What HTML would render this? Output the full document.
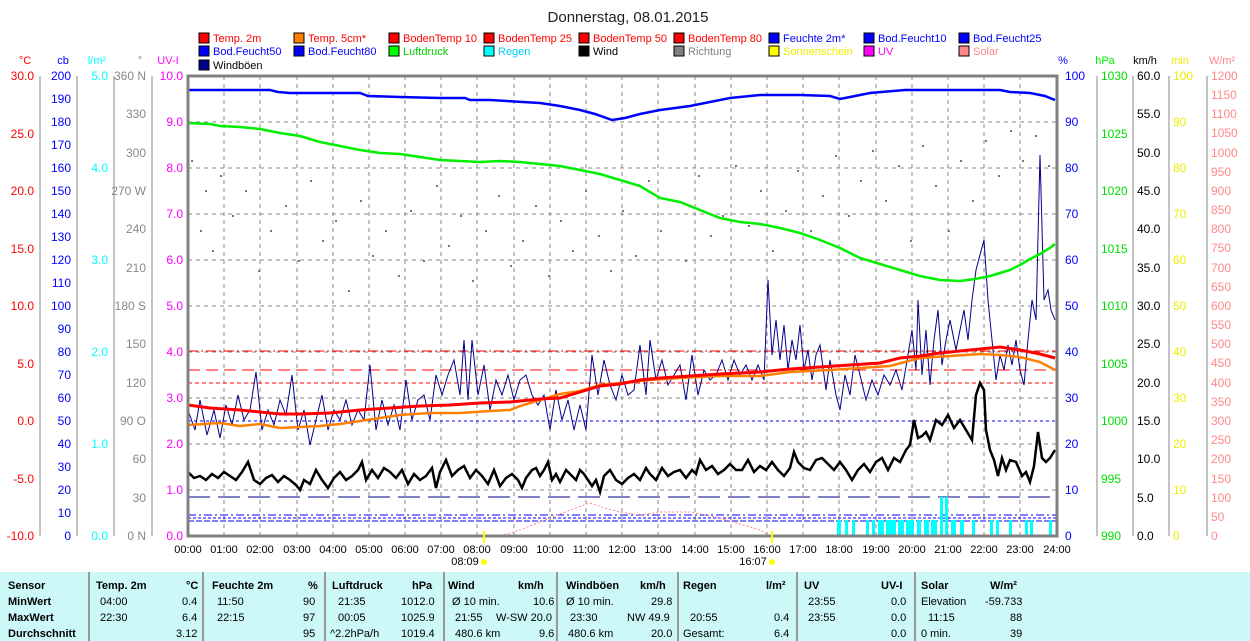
<!DOCTYPE html>
<html><head><meta charset="utf-8"><style>
html,body{margin:0;padding:0;background:#fff;width:1250px;height:641px;overflow:hidden;font-family:"Liberation Sans",sans-serif}
svg text{font-family:"Liberation Sans",sans-serif}
#tbl{position:absolute;left:0;top:572px;width:1250px;height:69px;background:#ccf8f8;font-size:11px}
#tbl div{position:absolute;white-space:nowrap}
.b{font-weight:bold}
.sep{position:absolute;top:0;width:2px;height:69px;background:#999}
</style></head><body>
<svg width="1250" height="572" style="position:absolute;left:0;top:0">
<text x="628" y="22" font-size="15" text-anchor="middle" fill="#222">Donnerstag, 08.01.2015</text>
<g font-size="11">
<rect x="199" y="33" width="10" height="10" fill="#f00" stroke="#000"/><text x="213" y="42" fill="#f00">Temp. 2m</text>
<rect x="294" y="33" width="10" height="10" fill="#ff8000" stroke="#000"/><text x="308" y="42" fill="#f00">Temp. 5cm*</text>
<rect x="389" y="33" width="10" height="10" fill="#f00" stroke="#000"/><text x="403" y="42" fill="#f00">BodenTemp 10</text>
<rect x="484" y="33" width="10" height="10" fill="#f00" stroke="#000"/><text x="498" y="42" fill="#f00">BodenTemp 25</text>
<rect x="579" y="33" width="10" height="10" fill="#f00" stroke="#000"/><text x="593" y="42" fill="#f00">BodenTemp 50</text>
<rect x="674" y="33" width="10" height="10" fill="#f00" stroke="#000"/><text x="688" y="42" fill="#f00">BodenTemp 80</text>
<rect x="769" y="33" width="10" height="10" fill="#00f" stroke="#000"/><text x="783" y="42" fill="#00f">Feuchte 2m*</text>
<rect x="864" y="33" width="10" height="10" fill="#00f" stroke="#000"/><text x="878" y="42" fill="#00f">Bod.Feucht10</text>
<rect x="959" y="33" width="10" height="10" fill="#00f" stroke="#000"/><text x="973" y="42" fill="#00f">Bod.Feucht25</text>
<rect x="199" y="46" width="10" height="10" fill="#00f" stroke="#000"/><text x="213" y="55" fill="#00f">Bod.Feucht50</text>
<rect x="294" y="46" width="10" height="10" fill="#00f" stroke="#000"/><text x="308" y="55" fill="#00f">Bod.Feucht80</text>
<rect x="389" y="46" width="10" height="10" fill="#0f0" stroke="#000"/><text x="403" y="55" fill="#0c0">Luftdruck</text>
<rect x="484" y="46" width="10" height="10" fill="#0ff" stroke="#000"/><text x="498" y="55" fill="#0cf">Regen</text>
<rect x="579" y="46" width="10" height="10" fill="#000" stroke="#000"/><text x="593" y="55" fill="#000">Wind</text>
<rect x="674" y="46" width="10" height="10" fill="#808080" stroke="#000"/><text x="688" y="55" fill="#808080">Richtung</text>
<rect x="769" y="46" width="10" height="10" fill="#ff0" stroke="#000"/><text x="783" y="55" fill="#ee0">Sonnenschein</text>
<rect x="864" y="46" width="10" height="10" fill="#f0f" stroke="#000"/><text x="878" y="55" fill="#f0f">UV</text>
<rect x="959" y="46" width="10" height="10" fill="#f88" stroke="#000"/><text x="973" y="55" fill="#f88">Solar</text>
<rect x="199" y="60" width="10" height="10" fill="#008" stroke="#000"/><text x="213" y="69" fill="#000">Windböen</text>
</g>
<g font-size="11" text-anchor="middle">
<text x="25" y="64" fill="#f00">°C</text><text x="63" y="64" fill="#00f">cb</text><text x="97" y="64" fill="#0ff">l/m²</text><text x="140" y="64" fill="#888">°</text><text x="168" y="64" fill="#f0f">UV-I</text>
<text x="1063" y="64" fill="#00f">%</text><text x="1105" y="64" fill="#0e0">hPa</text><text x="1145" y="64" fill="#000">km/h</text><text x="1180" y="64" fill="#ee0">min</text><text x="1222" y="64" fill="#f88">W/m²</text>
</g>
<g stroke="#888" stroke-width="1">
<line x1="40" y1="76" x2="40" y2="536"/><line x1="77" y1="76" x2="77" y2="536"/><line x1="114" y1="76" x2="114" y2="536"/><line x1="152" y1="76" x2="152" y2="536"/>
<line x1="1097" y1="76" x2="1097" y2="536"/><line x1="1133" y1="76" x2="1133" y2="536"/><line x1="1169" y1="76" x2="1169" y2="536"/><line x1="1207" y1="76" x2="1207" y2="536"/>
</g>
<g font-size="12" text-anchor="end">
<g fill="#f00"><text x="34" y="80">30.0</text><text x="34" y="138">25.0</text><text x="34" y="195">20.0</text><text x="34" y="253">15.0</text><text x="34" y="310">10.0</text><text x="34" y="368">5.0</text><text x="34" y="425">0.0</text><text x="34" y="483">-5.0</text><text x="34" y="540">-10.0</text></g>
<g fill="#00f"><text x="71" y="80">200</text><text x="71" y="103">190</text><text x="71" y="126">180</text><text x="71" y="149">170</text><text x="71" y="172">160</text><text x="71" y="195">150</text><text x="71" y="218">140</text><text x="71" y="241">130</text><text x="71" y="264">120</text><text x="71" y="287">110</text><text x="71" y="310">100</text><text x="71" y="333">90</text><text x="71" y="356">80</text><text x="71" y="379">70</text><text x="71" y="402">60</text><text x="71" y="425">50</text><text x="71" y="448">40</text><text x="71" y="471">30</text><text x="71" y="494">20</text><text x="71" y="517">10</text><text x="71" y="540">0</text></g>
<g fill="#0ff"><text x="108" y="80">5.0</text><text x="108" y="172">4.0</text><text x="108" y="264">3.0</text><text x="108" y="356">2.0</text><text x="108" y="448">1.0</text><text x="108" y="540">0.0</text></g>
<g fill="#888"><text x="146" y="80">360 N</text><text x="146" y="118">330</text><text x="146" y="157">300</text><text x="146" y="195">270 W</text><text x="146" y="233">240</text><text x="146" y="272">210</text><text x="146" y="310">180 S</text><text x="146" y="348">150</text><text x="146" y="387">120</text><text x="146" y="425">90 O</text><text x="146" y="463">60</text><text x="146" y="502">30</text><text x="146" y="540">0 N</text></g>
<g fill="#f0f"><text x="183" y="80">10.0</text><text x="183" y="126">9.0</text><text x="183" y="172">8.0</text><text x="183" y="218">7.0</text><text x="183" y="264">6.0</text><text x="183" y="310">5.0</text><text x="183" y="356">4.0</text><text x="183" y="402">3.0</text><text x="183" y="448">2.0</text><text x="183" y="494">1.0</text><text x="183" y="540">0.0</text></g>
</g>
<g font-size="12">
<g fill="#00f"><text x="1065" y="80">100</text><text x="1065" y="126">90</text><text x="1065" y="172">80</text><text x="1065" y="218">70</text><text x="1065" y="264">60</text><text x="1065" y="310">50</text><text x="1065" y="356">40</text><text x="1065" y="402">30</text><text x="1065" y="448">20</text><text x="1065" y="494">10</text><text x="1065" y="540">0</text></g>
<g fill="#0d0"><text x="1101" y="80">1030</text><text x="1101" y="138">1025</text><text x="1101" y="195">1020</text><text x="1101" y="253">1015</text><text x="1101" y="310">1010</text><text x="1101" y="368">1005</text><text x="1101" y="425">1000</text><text x="1101" y="483">995</text><text x="1101" y="540">990</text></g>
<g fill="#000"><text x="1137" y="80">60.0</text><text x="1137" y="118">55.0</text><text x="1137" y="157">50.0</text><text x="1137" y="195">45.0</text><text x="1137" y="233">40.0</text><text x="1137" y="272">35.0</text><text x="1137" y="310">30.0</text><text x="1137" y="348">25.0</text><text x="1137" y="387">20.0</text><text x="1137" y="425">15.0</text><text x="1137" y="463">10.0</text><text x="1137" y="502">5.0</text><text x="1137" y="540">0.0</text></g>
<g fill="#ee0"><text x="1173" y="80">100</text><text x="1173" y="126">90</text><text x="1173" y="172">80</text><text x="1173" y="218">70</text><text x="1173" y="264">60</text><text x="1173" y="310">50</text><text x="1173" y="356">40</text><text x="1173" y="402">30</text><text x="1173" y="448">20</text><text x="1173" y="494">10</text><text x="1173" y="540">0</text></g>
<g fill="#f88"><text x="1211" y="80">1200</text><text x="1211" y="99">1150</text><text x="1211" y="118">1100</text><text x="1211" y="137">1050</text><text x="1211" y="157">1000</text><text x="1211" y="176">950</text><text x="1211" y="195">900</text><text x="1211" y="214">850</text><text x="1211" y="233">800</text><text x="1211" y="252">750</text><text x="1211" y="272">700</text><text x="1211" y="291">650</text><text x="1211" y="310">600</text><text x="1211" y="329">550</text><text x="1211" y="348">500</text><text x="1211" y="367">450</text><text x="1211" y="387">400</text><text x="1211" y="406">350</text><text x="1211" y="425">300</text><text x="1211" y="444">250</text><text x="1211" y="463">200</text><text x="1211" y="483">150</text><text x="1211" y="502">100</text><text x="1211" y="521">50</text><text x="1211" y="540">0</text></g>
</g>
<g stroke="#888" stroke-dasharray="4,4" stroke-width="1">
<line x1="188" y1="122" x2="1057" y2="122"/><line x1="188" y1="168" x2="1057" y2="168"/><line x1="188" y1="214" x2="1057" y2="214"/><line x1="188" y1="260" x2="1057" y2="260"/><line x1="188" y1="306" x2="1057" y2="306"/><line x1="188" y1="352" x2="1057" y2="352"/><line x1="188" y1="398" x2="1057" y2="398"/><line x1="188" y1="444" x2="1057" y2="444"/><line x1="188" y1="490" x2="1057" y2="490"/>
<line x1="224" y1="76" x2="224" y2="536"/><line x1="260" y1="76" x2="260" y2="536"/><line x1="297" y1="76" x2="297" y2="536"/><line x1="333" y1="76" x2="333" y2="536"/><line x1="369" y1="76" x2="369" y2="536"/><line x1="405" y1="76" x2="405" y2="536"/><line x1="441" y1="76" x2="441" y2="536"/><line x1="477" y1="76" x2="477" y2="536"/><line x1="514" y1="76" x2="514" y2="536"/><line x1="550" y1="76" x2="550" y2="536"/><line x1="586" y1="76" x2="586" y2="536"/><line x1="622" y1="76" x2="622" y2="536"/><line x1="658" y1="76" x2="658" y2="536"/><line x1="695" y1="76" x2="695" y2="536"/><line x1="731" y1="76" x2="731" y2="536"/><line x1="767" y1="76" x2="767" y2="536"/><line x1="803" y1="76" x2="803" y2="536"/><line x1="839" y1="76" x2="839" y2="536"/><line x1="876" y1="76" x2="876" y2="536"/><line x1="912" y1="76" x2="912" y2="536"/><line x1="948" y1="76" x2="948" y2="536"/><line x1="984" y1="76" x2="984" y2="536"/><line x1="1020" y1="76" x2="1020" y2="536"/>
</g>
<g fill="#777">
<rect x="191" y="160" width="2" height="2"/><rect x="200" y="230" width="2" height="2"/><rect x="205" y="190" width="2" height="2"/><rect x="212" y="250" width="2" height="2"/><rect x="220" y="175" width="2" height="2"/><rect x="232" y="215" width="2" height="2"/><rect x="245" y="190" width="2" height="2"/><rect x="258" y="270" width="2" height="2"/><rect x="270" y="230" width="2" height="2"/><rect x="285" y="205" width="2" height="2"/><rect x="298" y="260" width="2" height="2"/><rect x="310" y="180" width="2" height="2"/><rect x="322" y="240" width="2" height="2"/><rect x="335" y="220" width="2" height="2"/><rect x="348" y="290" width="2" height="2"/><rect x="360" y="200" width="2" height="2"/><rect x="372" y="255" width="2" height="2"/><rect x="385" y="230" width="2" height="2"/><rect x="398" y="275" width="2" height="2"/><rect x="410" y="210" width="2" height="2"/><rect x="423" y="260" width="2" height="2"/><rect x="436" y="185" width="2" height="2"/><rect x="448" y="245" width="2" height="2"/><rect x="460" y="215" width="2" height="2"/><rect x="472" y="280" width="2" height="2"/><rect x="485" y="230" width="2" height="2"/><rect x="498" y="195" width="2" height="2"/><rect x="510" y="265" width="2" height="2"/><rect x="522" y="240" width="2" height="2"/><rect x="535" y="205" width="2" height="2"/><rect x="548" y="275" width="2" height="2"/><rect x="560" y="220" width="2" height="2"/><rect x="572" y="250" width="2" height="2"/><rect x="585" y="190" width="2" height="2"/><rect x="598" y="235" width="2" height="2"/><rect x="610" y="270" width="2" height="2"/><rect x="622" y="210" width="2" height="2"/><rect x="635" y="255" width="2" height="2"/><rect x="648" y="180" width="2" height="2"/><rect x="660" y="230" width="2" height="2"/><rect x="672" y="200" width="2" height="2"/><rect x="685" y="260" width="2" height="2"/><rect x="698" y="175" width="2" height="2"/><rect x="710" y="235" width="2" height="2"/><rect x="722" y="215" width="2" height="2"/><rect x="735" y="165" width="2" height="2"/><rect x="748" y="225" width="2" height="2"/><rect x="760" y="190" width="2" height="2"/><rect x="772" y="250" width="2" height="2"/><rect x="785" y="210" width="2" height="2"/><rect x="797" y="170" width="2" height="2"/><rect x="810" y="230" width="2" height="2"/><rect x="822" y="195" width="2" height="2"/><rect x="835" y="155" width="2" height="2"/><rect x="848" y="215" width="2" height="2"/><rect x="860" y="180" width="2" height="2"/><rect x="872" y="150" width="2" height="2"/><rect x="885" y="200" width="2" height="2"/><rect x="898" y="165" width="2" height="2"/><rect x="910" y="240" width="2" height="2"/><rect x="922" y="145" width="2" height="2"/><rect x="935" y="185" width="2" height="2"/><rect x="948" y="230" width="2" height="2"/><rect x="960" y="160" width="2" height="2"/><rect x="972" y="200" width="2" height="2"/><rect x="985" y="140" width="2" height="2"/><rect x="998" y="175" width="2" height="2"/><rect x="1010" y="130" width="2" height="2"/><rect x="1022" y="160" width="2" height="2"/><rect x="1035" y="135" width="2" height="2"/><rect x="1048" y="165" width="2" height="2"/>
</g>
<g fill="none" stroke-width="1">
<line x1="188" y1="497" x2="1057" y2="497" stroke="#008" stroke-dasharray="22,8"/>
<line x1="188" y1="515" x2="1057" y2="515" stroke="#00f" stroke-dasharray="8,3,2,3"/>
<line x1="188" y1="518" x2="1057" y2="518" stroke="#00f" stroke-dasharray="3,2"/>
<line x1="188" y1="521" x2="1057" y2="521" stroke="#00f" stroke-dasharray="6,2"/>
<line x1="188" y1="351" x2="1057" y2="351" stroke="#f00" stroke-dasharray="10,3,2,3"/>
<line x1="188" y1="370" x2="1057" y2="370" stroke="#f00" stroke-dasharray="12,6"/>
<line x1="188" y1="383" x2="1057" y2="383" stroke="#f00" stroke-dasharray="4,3"/>
<line x1="188" y1="421" x2="1057" y2="421" stroke="#00f" stroke-dasharray="3,3"/>
<polyline points="500,536 520,530 545,520 570,510 590,503 605,508 620,512 640,515 660,512 690,512 720,518 760,530 770,536" stroke="#f88" stroke-dasharray="2,2"/>
</g>
<g fill="#0ff">
<rect x="837" y="520" width="4" height="16"/><rect x="845" y="520" width="3" height="16"/><rect x="852" y="520" width="3" height="16"/><rect x="866" y="520" width="3" height="16"/><rect x="872" y="520" width="3" height="16"/><rect x="878" y="520" width="6" height="16"/><rect x="886" y="520" width="10" height="16"/><rect x="898" y="520" width="6" height="16"/><rect x="906" y="520" width="8" height="16"/><rect x="917" y="520" width="4" height="16"/><rect x="924" y="520" width="5" height="16"/><rect x="931" y="520" width="6" height="16"/><rect x="940" y="497" width="3" height="39"/><rect x="945" y="497" width="3" height="39"/><rect x="951" y="520" width="5" height="16"/><rect x="960" y="520" width="4" height="16"/><rect x="972" y="520" width="3" height="16"/><rect x="990" y="520" width="3" height="16"/><rect x="996" y="520" width="3" height="16"/><rect x="1009" y="520" width="3" height="16"/><rect x="1025" y="520" width="3" height="16"/><rect x="1030" y="520" width="3" height="16"/><rect x="1049" y="520" width="3" height="16"/>
</g>
<polyline fill="none" stroke="#00008b" stroke-width="1" points="188,410 195,430 200,400 207,435 214,410 220,438 226,405 232,425 238,395 244,420 250,410 256,372 262,430 268,410 274,425 280,400 286,415 292,375 298,430 304,410 310,445 316,420 322,395 328,430 334,410 340,420 346,400 352,425 358,410 364,420 370,365 376,430 382,400 388,425 394,405 400,430 406,380 412,420 418,400 424,395 430,420 436,375 442,395 448,375 454,360 460,395 464,340 468,400 472,340 478,395 484,365 490,410 496,380 502,395 508,375 514,400 520,380 526,375 532,395 538,405 544,395 550,430 556,390 562,420 568,400 574,430 580,405 586,430 592,355 598,395 604,360 610,385 616,400 622,375 628,395 634,390 640,345 646,395 650,340 656,380 662,360 668,385 674,375 680,365 686,400 692,355 698,395 704,370 710,380 716,375 722,360 728,380 734,360 740,375 746,365 752,380 758,365 764,380 768,280 772,355 776,320 780,360 784,325 788,370 792,340 796,360 800,325 804,370 808,350 812,380 816,355 820,345 826,390 830,360 836,395 840,410 845,375 850,395 855,355 860,375 866,400 872,380 878,395 884,375 890,385 896,370 902,390 908,355 912,330 916,370 918,300 922,375 926,330 930,385 934,340 938,310 942,365 946,340 950,320 956,350 960,330 964,310 968,340 972,300 976,270 980,255 984,240 988,300 992,340 996,380 1000,355 1004,370 1008,345 1012,365 1016,340 1020,370 1024,385 1028,340 1032,300 1036,320 1040,155 1044,300 1048,290 1051,310 1055,320"/>
<!-- humidity blue -->
<polyline fill="none" stroke="#0000ff" stroke-width="2.5" points="188,90 270,90 278,92 290,93 360,93 368,96 400,97 440,98 465,98 470,100 490,100 540,103 560,106 580,110 595,114 612,120 625,118 640,114 660,110 690,106 710,102 730,98 760,95 800,95 830,96 840,99 850,97 870,93 905,90 1000,90 1010,92 1030,93 1045,96 1055,100"/>
<polyline fill="none" stroke="#00ee00" stroke-width="2.5" points="188,123 210,124 220,126 240,127 260,129 280,133 300,136 320,142 340,146 360,150 380,153 400,154 420,157 440,160 460,161 480,162 500,161 520,162 540,164 560,166 580,170 600,174 620,180 640,186 660,198 680,202 700,210 720,218 740,222 760,224 780,228 800,233 820,240 840,248 860,258 880,264 900,270 920,276 940,280 960,281 975,279 990,276 1000,273 1010,270 1020,265 1030,259 1040,254 1050,248 1055,244"/>
<polyline fill="none" stroke="#ff8000" stroke-width="2.5" points="188,425 220,423 240,426 260,424 280,428 300,427 320,426 340,424 360,421 380,418 400,415 430,413 460,413 490,411 510,410 520,406 540,400 560,394 580,391 600,385 620,383 650,380 680,378 720,376 760,376 790,372 830,370 860,368 890,366 920,358 950,356 980,354 1000,355 1020,357 1040,362 1055,370"/>
<polyline fill="none" stroke="#ff0000" stroke-width="3" points="188,405 210,408 240,410 260,412 280,414 300,414 330,413 360,410 390,408 420,406 450,405 480,403 510,402 540,399 560,398 580,392 600,386 620,384 640,380 660,378 690,376 720,374 760,372 790,369 820,367 850,365 880,363 900,358 920,356 940,353 960,351 980,349 1000,347 1020,350 1040,354 1055,358"/>
<polyline fill="none" stroke="#000" stroke-width="2.5" points="188,472 194,478 200,476 206,480 212,474 218,478 224,472 230,476 236,480 242,472 248,462 254,480 260,484 266,478 272,475 278,482 284,476 290,480 296,485 300,490 304,480 310,484 316,470 322,480 328,488 334,478 340,472 346,480 352,476 358,470 362,462 366,480 372,470 378,478 384,468 390,472 396,478 402,470 408,484 414,474 420,480 426,476 432,468 436,488 440,472 446,460 452,476 458,470 464,466 470,478 476,470 482,476 488,484 494,470 500,486 506,478 512,474 518,480 522,488 526,478 532,470 536,468 540,476 544,470 548,462 552,480 556,474 560,482 566,470 572,476 576,480 580,470 584,474 588,480 592,486 596,480 600,492 604,476 610,470 616,480 622,484 628,478 634,474 640,480 646,468 650,474 656,480 662,468 668,476 674,472 680,470 686,478 692,470 696,474 700,460 706,470 712,466 718,474 724,470 730,464 736,470 742,470 748,460 754,472 760,466 766,470 772,462 778,470 784,476 790,468 794,452 798,462 804,468 810,470 816,460 822,458 828,464 834,470 840,462 846,470 852,480 858,470 864,464 870,472 876,462 882,458 888,470 894,458 900,462 906,450 910,445 914,420 918,438 922,436 926,432 930,440 936,420 942,425 948,415 954,428 960,420 966,430 972,440 976,395 980,383 984,390 986,430 990,450 994,460 998,476 1002,458 1006,470 1010,460 1016,462 1022,476 1026,472 1030,482 1034,466 1038,432 1042,458 1046,462 1050,458 1055,450"/>
<rect x="188" y="76" width="869" height="460" fill="none" stroke="#808080" stroke-width="3"/>
<g font-size="11" text-anchor="middle" fill="#000">
<text x="188" y="553">00:00</text><text x="224" y="553">01:00</text><text x="260" y="553">02:00</text><text x="297" y="553">03:00</text><text x="333" y="553">04:00</text><text x="369" y="553">05:00</text><text x="405" y="553">06:00</text><text x="441" y="553">07:00</text><text x="477" y="553">08:00</text><text x="514" y="553">09:00</text><text x="550" y="553">10:00</text><text x="586" y="553">11:00</text><text x="622" y="553">12:00</text><text x="658" y="553">13:00</text><text x="695" y="553">14:00</text><text x="731" y="553">15:00</text><text x="767" y="553">16:00</text><text x="803" y="553">17:00</text><text x="839" y="553">18:00</text><text x="876" y="553">19:00</text><text x="912" y="553">20:00</text><text x="948" y="553">21:00</text><text x="984" y="553">22:00</text><text x="1020" y="553">23:00</text><text x="1057" y="553">24:00</text>
<text x="465" y="565">08:09</text><text x="753" y="565">16:07</text>
</g>
<rect x="483" y="531" width="2" height="12" fill="#ff0"/><circle cx="484" cy="562" r="3" fill="#ff0"/>
<rect x="771" y="531" width="2" height="12" fill="#ff0"/><circle cx="772" cy="562" r="3" fill="#ff0"/>
</svg>
<div id="tbl">
<div class="sep" style="left:88px"></div><div class="sep" style="left:202px"></div><div class="sep" style="left:324px"></div><div class="sep" style="left:443px"></div><div class="sep" style="left:556px"></div><div class="sep" style="left:677px"></div><div class="sep" style="left:796px"></div><div class="sep" style="left:914px"></div>
<div class="b" style="left:8px;top:8px">Sensor</div><div class="b" style="left:8px;top:24px">MinWert</div><div class="b" style="left:8px;top:40px">MaxWert</div><div class="b" style="left:8px;top:56px">Durchschnitt</div>
<div class="b" style="left:96px;top:8px">Temp. 2m</div><div class="b" style="left:186px;top:8px">°C</div>
<div style="left:100px;top:24px">04:00</div><div style="left:182px;top:24px">0.4</div><div style="left:100px;top:40px">22:30</div><div style="left:182px;top:40px">6.4</div><div style="left:176px;top:56px">3.12</div>
<div class="b" style="left:212px;top:8px">Feuchte 2m</div><div class="b" style="left:308px;top:8px">%</div>
<div style="left:217px;top:24px">11:50</div><div style="left:303px;top:24px">90</div><div style="left:217px;top:40px">22:15</div><div style="left:303px;top:40px">97</div><div style="left:303px;top:56px">95</div>
<div class="b" style="left:332px;top:8px">Luftdruck</div><div class="b" style="left:412px;top:8px">hPa</div>
<div style="left:338px;top:24px">21:35</div><div style="left:401px;top:24px">1012.0</div><div style="left:338px;top:40px">00:05</div><div style="left:401px;top:40px">1025.9</div><div style="left:330px;top:56px">^2.2hPa/h</div><div style="left:401px;top:56px">1019.4</div>
<div class="b" style="left:448px;top:8px">Wind</div><div class="b" style="left:518px;top:8px">km/h</div>
<div style="left:452px;top:24px">Ø 10 min.</div><div style="left:533px;top:24px">10.6</div><div style="left:455px;top:40px">21:55</div><div style="left:496px;top:40px">W-SW 20.0</div><div style="left:455px;top:56px">480.6 km</div><div style="left:539px;top:56px">9.6</div>
<div class="b" style="left:566px;top:8px">Windböen</div><div class="b" style="left:640px;top:8px">km/h</div>
<div style="left:566px;top:24px">Ø 10 min.</div><div style="left:651px;top:24px">29.8</div><div style="left:570px;top:40px">23:30</div><div style="left:627px;top:40px">NW 49.9</div><div style="left:568px;top:56px">480.6 km</div><div style="left:651px;top:56px">20.0</div>
<div class="b" style="left:683px;top:8px">Regen</div><div class="b" style="left:766px;top:8px">l/m²</div>
<div style="left:690px;top:40px">20:55</div><div style="left:774px;top:40px">0.4</div><div style="left:683px;top:56px">Gesamt:</div><div style="left:774px;top:56px">6.4</div>
<div class="b" style="left:804px;top:8px">UV</div><div class="b" style="left:881px;top:8px">UV-I</div>
<div style="left:808px;top:24px">23:55</div><div style="left:891px;top:24px">0.0</div><div style="left:808px;top:40px">23:55</div><div style="left:891px;top:40px">0.0</div><div style="left:891px;top:56px">0.0</div>
<div class="b" style="left:921px;top:8px">Solar</div><div class="b" style="left:990px;top:8px">W/m²</div>
<div style="left:921px;top:24px">Elevation</div><div style="left:985px;top:24px">-59.733</div><div style="left:928px;top:40px">11:15</div><div style="left:1010px;top:40px">88</div><div style="left:921px;top:56px">0 min.</div><div style="left:1010px;top:56px">39</div>
</div>
</body></html>
